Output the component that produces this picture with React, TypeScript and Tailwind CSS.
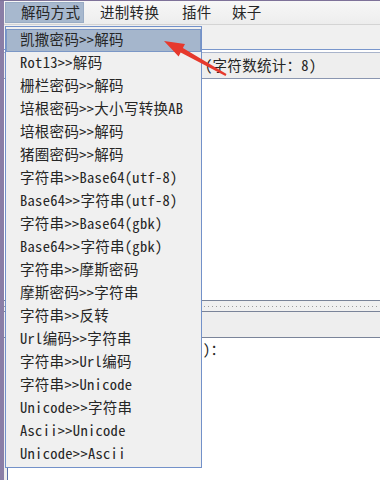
import React from 'react';

const items = [
  '凯撒密码>>解码',
  'Rot13>>解码',
  '栅栏密码>>解码',
  '培根密码>>大小写转换AB',
  '培根密码>>解码',
  '猪圈密码>>解码',
  '字符串>>Base64(utf-8)',
  'Base64>>字符串(utf-8)',
  '字符串>>Base64(gbk)',
  'Base64>>字符串(gbk)',
  '字符串>>摩斯密码',
  '摩斯密码>>字符串',
  '字符串>>反转',
  'Url编码>>字符串',
  '字符串>>Url编码',
  '字符串>>Unicode',
  'Unicode>>字符串',
  'Ascii>>Unicode',
  'Unicode>>Ascii',
];

function Arrow() {
  // red annotation arrow pointing at the first menu entry
  return (
    <svg className="absolute left-0 top-0 pointer-events-none" width="380" height="480">
      <polygon
        points="164,40 185,43 182.9,47 226.5,73.1 225.5,74.9 180.7,51.4 178.6,55.4"
        fill="#e6392d"
      />
    </svg>
  );
}

export default function App() {
  return (
    <div className="relative w-[380px] h-[480px] overflow-hidden flex border-t border-[#7e7299] bg-[#eeeeee] text-[#262626] text-[14.5px] font-light tracking-[0.3px] font-['Noto_Sans_Mono_CJK_SC','Noto_Sans_CJK_SC',monospace]">
      <div className="w-[4px] shrink-0 bg-[#8a7ea6]" />

      <div className="flex-1 flex flex-col">
        {/* menu bar */}
        <div className="h-[24px] py-[1px] flex bg-gradient-to-b from-[#f7f7f7] to-[#ededed] border-b border-[#d4d4d4]">
          <div className="ml-[1px] w-[79px] pl-[15px] pb-[2px] flex items-center bg-[#a7b8ce] border border-[#98abc4]">解码方式</div>
          <div className="w-[82px] pl-[16px] pb-[2px] flex items-center">进制转换</div>
          <div className="w-[50px] pl-[16px] pb-[2px] flex items-center">插件</div>
          <div className="pl-[16px] pb-[2px] flex items-center">妹子</div>
        </div>

        <div className="h-[24px] bg-[#f0f0f0]" />

        <div className="border-t border-[#7896cc] h-[3px] bg-white" />
        <div className="h-[27px] border-t border-[#a9b4cb] border-b border-b-[#8a96b0] pl-[201px] pb-[2px] flex items-center">
          (字符数统计：8)
        </div>

        <div className="h-[221px] bg-white" />

        <div className="h-[12px] border-y border-[#7a8499] bg-[#f0f0f0] flex items-center">
          <div className="h-px w-full bg-[repeating-linear-gradient(90deg,#9c9c9c_0_1px,transparent_1px_4px)]" />
        </div>

        <div className="h-[26px] border-b border-[#7a8499]" />

        <div className="flex-1 pl-[3px]">
          <div className="h-full bg-white border-l border-[#5a6fa8] pl-[195px]">
            )：
          </div>
        </div>
      </div>

      {/* open dropdown of 解码方式 */}
      <div className="absolute left-[5px] top-[25px] w-[197px] h-[442px] bg-[#f0f0f0] border border-[#7391c9] pt-[2px]">
        {items.map((t, i) => (
          <div
            key={t}
            className={
              i === 0
                ? 'h-[23px] pl-[13px] pb-[4px] flex items-center bg-[#a5b6cc] border border-[#7b97c6]'
                : 'h-[23px] pl-[14px] pb-[4px] flex items-center'
            }
          >
            {t}
          </div>
        ))}
      </div>

      <Arrow />
    </div>
  );
}
